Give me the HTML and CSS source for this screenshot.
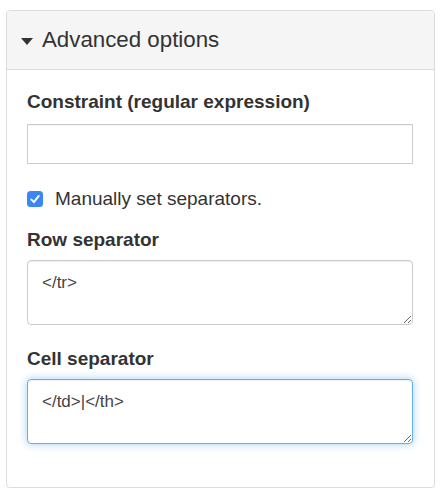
FILE: index.html
```html
<!DOCTYPE html>
<html>
<head>
<meta charset="utf-8">
<link rel="stylesheet" href="styles.css">
</head>
<body>
<div class="panel">
  <div class="panel-heading">
    <svg class="caret" width="12" height="7" viewBox="0 0 12 7"><polygon points="0,0 12,0 6,7" fill="#333"/></svg>
    <span class="title">Advanced options</span>
  </div>
  <div class="panel-body">
    <label class="label first">Constraint (regular expression)</label>
    <input class="input" type="text">
    <div class="check-row">
      <span class="checkbox">
        <svg width="16" height="16" viewBox="0 0 16 16"><rect x="0" y="0" width="16" height="16" rx="3.5" fill="#3a86f5"/><path d="M4.2 8.4 L6.9 11.2 L11.8 4.9" stroke="#fff" stroke-width="1.9" fill="none" stroke-linecap="round" stroke-linejoin="round"/></svg>
      </span>
      <span class="check-text">Manually set separators.</span>
    </div>
    <label class="label row-label">Row separator</label>
    <textarea class="area">&lt;/tr&gt;</textarea>
    <label class="label cell-label">Cell separator</label>
    <textarea class="area focus">&lt;/td&gt;|&lt;/th&gt;</textarea>
  </div>
</div>
</body>
</html>
```

FILE: styles.css
```css
html, body {
  margin: 0;
  padding: 0;
  background: #fff;
}
body {
  font-family: "Liberation Sans", Arial, sans-serif;
  color: #333;
}
.panel {
  margin: 10px 0 0 6px;
  width: 427px;
  height: 476px;
  border: 1px solid #ddd;
  border-radius: 4px;
  box-shadow: 0 1px 1px rgba(0,0,0,0.05);
  box-sizing: content-box;
}
.panel-heading {
  height: 58px;
  background: #f5f5f5;
  border-bottom: 1px solid #ddd;
  border-radius: 4px 4px 0 0;
  display: flex;
  align-items: center;
  padding-left: 14px;
}
.caret {
  display: block;
  margin-top: 2px;
  margin-right: 9px;
}
.title {
  font-size: 22.3px;
  line-height: 26px;
  color: #333;
}
.panel-body {
  padding: 21px 21px 0 20px;
  display: flex;
  flex-direction: column;
}
.label {
  display: block;
  font-weight: bold;
  font-size: 19px;
  line-height: 22px;
  color: #333;
}
.label.first {
  margin-bottom: 11px;
}
.input {
  display: block;
  box-sizing: border-box;
  width: 386px;
  height: 40px;
  margin: 0;
  border: 1px solid #ccc;
  border-radius: 0;
  box-shadow: inset 0 1px 1px rgba(0,0,0,0.04);
  font-family: "Liberation Sans", Arial, sans-serif;
  font-size: 17px;
  outline: none;
}
.check-row {
  display: flex;
  align-items: center;
  margin-top: 24px;
  height: 22px;
}
.checkbox {
  display: block;
  width: 16px;
  height: 16px;
  margin-right: 12px;
}
.checkbox svg {
  display: block;
}
.check-text {
  font-size: 19px;
  line-height: 22px;
  color: #333;
}
.row-label {
  margin-top: 19px;
  margin-bottom: 9px;
}
.cell-label {
  margin-top: 23px;
  margin-bottom: 9px;
}
.area {
  display: block;
  box-sizing: border-box;
  width: 386px;
  height: 65px;
  margin: 0;
  padding: 12px 14px 8px;
  border: 1px solid #ccc;
  border-radius: 4px;
  box-shadow: inset 0 1px 1px rgba(0,0,0,0.075);
  font-family: "Liberation Sans", Arial, sans-serif;
  font-size: 17px;
  line-height: 20px;
  color: #444;
  outline: none;
  resize: both;
}
.area.focus {
  border-color: #66afe9;
  box-shadow: inset 0 1px 1px rgba(0,0,0,0.075), 0 0 8px rgba(102,175,233,0.6);
}
```
